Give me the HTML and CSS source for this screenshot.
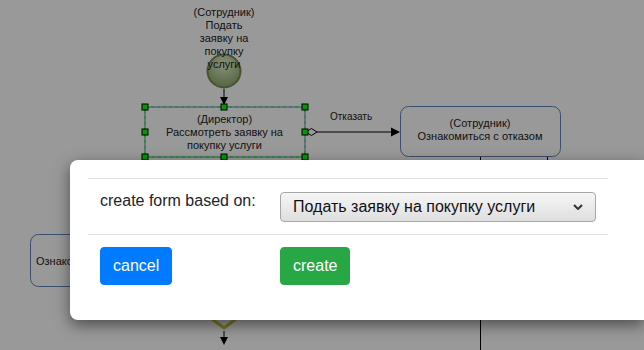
FILE: index.html
```html
<!DOCTYPE html>
<html lang="en">
<head>
    <meta charset="UTF-8">
    <title>Process editor</title>
    <link rel="stylesheet" href="styles.css">
</head>
<body>

    <!-- Diagram canvas -->
    <svg class="diagram" width="644" height="350" viewBox="0 0 644 350">
        <defs>
            <radialGradient id="startFill" cx="50%" cy="30%" r="70%">
                <stop offset="0%" stop-color="#e2f0cc"/>
                <stop offset="100%" stop-color="#8ca86c"/>
            </radialGradient>
            <clipPath id="leftClip">
                <rect x="0" y="0" width="70" height="350"/>
            </clipPath>
        </defs>

        <!-- start event -->
        <circle cx="224" cy="71" r="16.5" fill="url(#startFill)" stroke="#7a8950" stroke-width="2"/>
        <g class="label">
            <text x="224" y="15.5">(Сотрудник)</text>
            <text x="224" y="28.5">Подать</text>
            <text x="224" y="41.5">заявку на</text>
            <text x="224" y="54.5">покупку</text>
            <text x="224" y="67.5">услуги</text>
        </g>

        <!-- start -> director -->
        <line x1="224" y1="89" x2="224" y2="99" class="edge"/>
        <polygon points="220,97 228,97 224,105" fill="#000"/>

        <!-- director task (selected) -->
        <rect x="145" y="107" width="160" height="50" rx="5" fill="#fff" stroke="#6482b9"/>
        <rect x="145" y="107" width="160" height="50" fill="none" stroke="#00ff00" stroke-dasharray="3 3"/>
        <g class="label">
            <text x="224.5" y="123">(Директор)</text>
            <text x="224.5" y="136">Рассмотреть заявку на</text>
            <text x="224.5" y="149">покупку услуги</text>
        </g>

        <!-- reject edge -->
        <line x1="317" y1="132" x2="392" y2="132" class="edge"/>
        <polygon points="306,132 311.5,128.5 317,132 311.5,135.5" fill="#fff" stroke="#000"/>
        <polygon points="391,127.5 400,132 391,136.5" fill="#000"/>
        <text x="330" y="120" class="edge-label">Отказать</text>

        <!-- employee: read rejection -->
        <rect x="400.5" y="106.5" width="160" height="50" rx="8" fill="#fff" stroke="#6482b9"/>
        <g class="label">
            <text x="480" y="127">(Сотрудник)</text>
            <text x="480" y="140">Ознакомиться с отказом</text>
        </g>
        <line x1="480.5" y1="157" x2="480.5" y2="350" class="edge"/>
        <line x1="547.5" y1="157" x2="547.5" y2="175" class="edge"/>

        <!-- left task, mostly under the dialog -->
        <rect x="30.5" y="234.5" width="160" height="52" rx="8" fill="#fff" stroke="#6482b9"/>
        <text x="36" y="265" class="label-left" clip-path="url(#leftClip)">Ознаком</text>

        <!-- gateway below -->
        <polygon points="224,298 244,313 224,328 204,313" fill="#fff" stroke="#c8c83c" stroke-width="3"/>
        <line x1="224" y1="331" x2="224" y2="339" class="edge"/>
        <polygon points="220,337 228,337 224,345" fill="#000"/>

        <!-- selection handles -->
        <g class="handle">
            <rect x="142" y="104" width="6" height="6"/>
            <rect x="221" y="104" width="6" height="6"/>
            <rect x="302" y="104" width="6" height="6"/>
            <rect x="142" y="129" width="6" height="6"/>
            <rect x="302" y="129" width="6" height="6"/>
            <rect x="142" y="154" width="6" height="6"/>
            <rect x="221" y="154" width="6" height="6"/>
            <rect x="302" y="154" width="6" height="6"/>
        </g>
    </svg>

    <div class="backdrop"></div>

    <!-- Create form dialog -->
    <div class="modal">
        <div class="rule"></div>
        <div class="row row-field">
            <label class="field-label">create form based on:</label>
            <div class="select">
                <span>Подать заявку на покупку услуги</span>
                <svg width="10" height="6" viewBox="0 0 10 6"><path d="M1 1 L5 5 L9 1" fill="none" stroke="#333" stroke-width="2"/></svg>
            </div>
        </div>
        <div class="rule"></div>
        <div class="row row-actions">
            <div><button class="btn btn-cancel">cancel</button></div>
            <div><button class="btn btn-create">create</button></div>
        </div>
    </div>

</body>
</html>
```

FILE: styles.css
```css
body {
    margin: 0;
    font-family: 'Liberation Sans', Arial, sans-serif;
    background-color: #ffffff;
    color: #212529;
    width: 644px;
    height: 350px;
    overflow: hidden;
    position: relative;
}
.diagram {
    position: absolute;
    left: 0;
    top: 0;
}
.label text {
    font-family: 'Liberation Sans', Arial, sans-serif;
    font-size: 11px;
    fill: #222;
    text-anchor: middle;
}
.label-left {
    font-family: 'Liberation Sans', Arial, sans-serif;
    font-size: 11px;
    fill: #222;
}
.edge {
    stroke: #000;
    stroke-width: 1;
}
.edge-label {
    font-family: 'Liberation Sans', Arial, sans-serif;
    font-size: 10px;
    fill: #222;
}
.handle rect {
    fill: #00ff00;
    stroke: #000;
    stroke-width: 1;
}
.backdrop {
    position: absolute;
    inset: 0;
    background-color: rgba(0, 0, 0, 0.4);
}

/* Dialog */
.modal {
    position: absolute;
    left: 70px;
    top: 160px;
    width: 574px;
    height: 160px;
    box-sizing: border-box;
    padding: 18px 0 0 18px;
    background-color: #fff;
    border-radius: 8px 0 0 8px;
    box-shadow: 0 5px 15px rgba(0, 0, 0, 0.5);
}
.rule {
    width: 520px;
    border-top: 1px solid #dee2e6;
}
.row {
    display: grid;
    grid-template-columns: 180px 316px;
    padding-left: 12px;
}
.row-field {
    padding-top: 10px;
    padding-bottom: 12px;
    align-items: start;
}
.row-actions {
    padding-top: 12px;
}
.field-label {
    font-size: 16px;
    line-height: 24px;
}
.select {
    margin-top: 3px;
    height: 30px;
    box-sizing: border-box;
    border: 1px solid #a6a6a6;
    border-radius: 4px;
    background: linear-gradient(#f6f6f6, #dedede);
    display: flex;
    align-items: center;
    justify-content: space-between;
    padding: 0 12px 0 12px;
    font-size: 16px;
    color: #111;
}
.btn {
    font-family: 'Liberation Sans', Arial, sans-serif;
    font-size: 16px;
    line-height: 24px;
    padding: 6px 12px;
    border: 1px solid transparent;
    border-radius: 4px;
    color: #fff;
    cursor: pointer;
}
.btn-cancel {
    background-color: #007bff;
    border-color: #007bff;
}
.btn-create {
    background-color: #28a745;
    border-color: #28a745;
}
```
